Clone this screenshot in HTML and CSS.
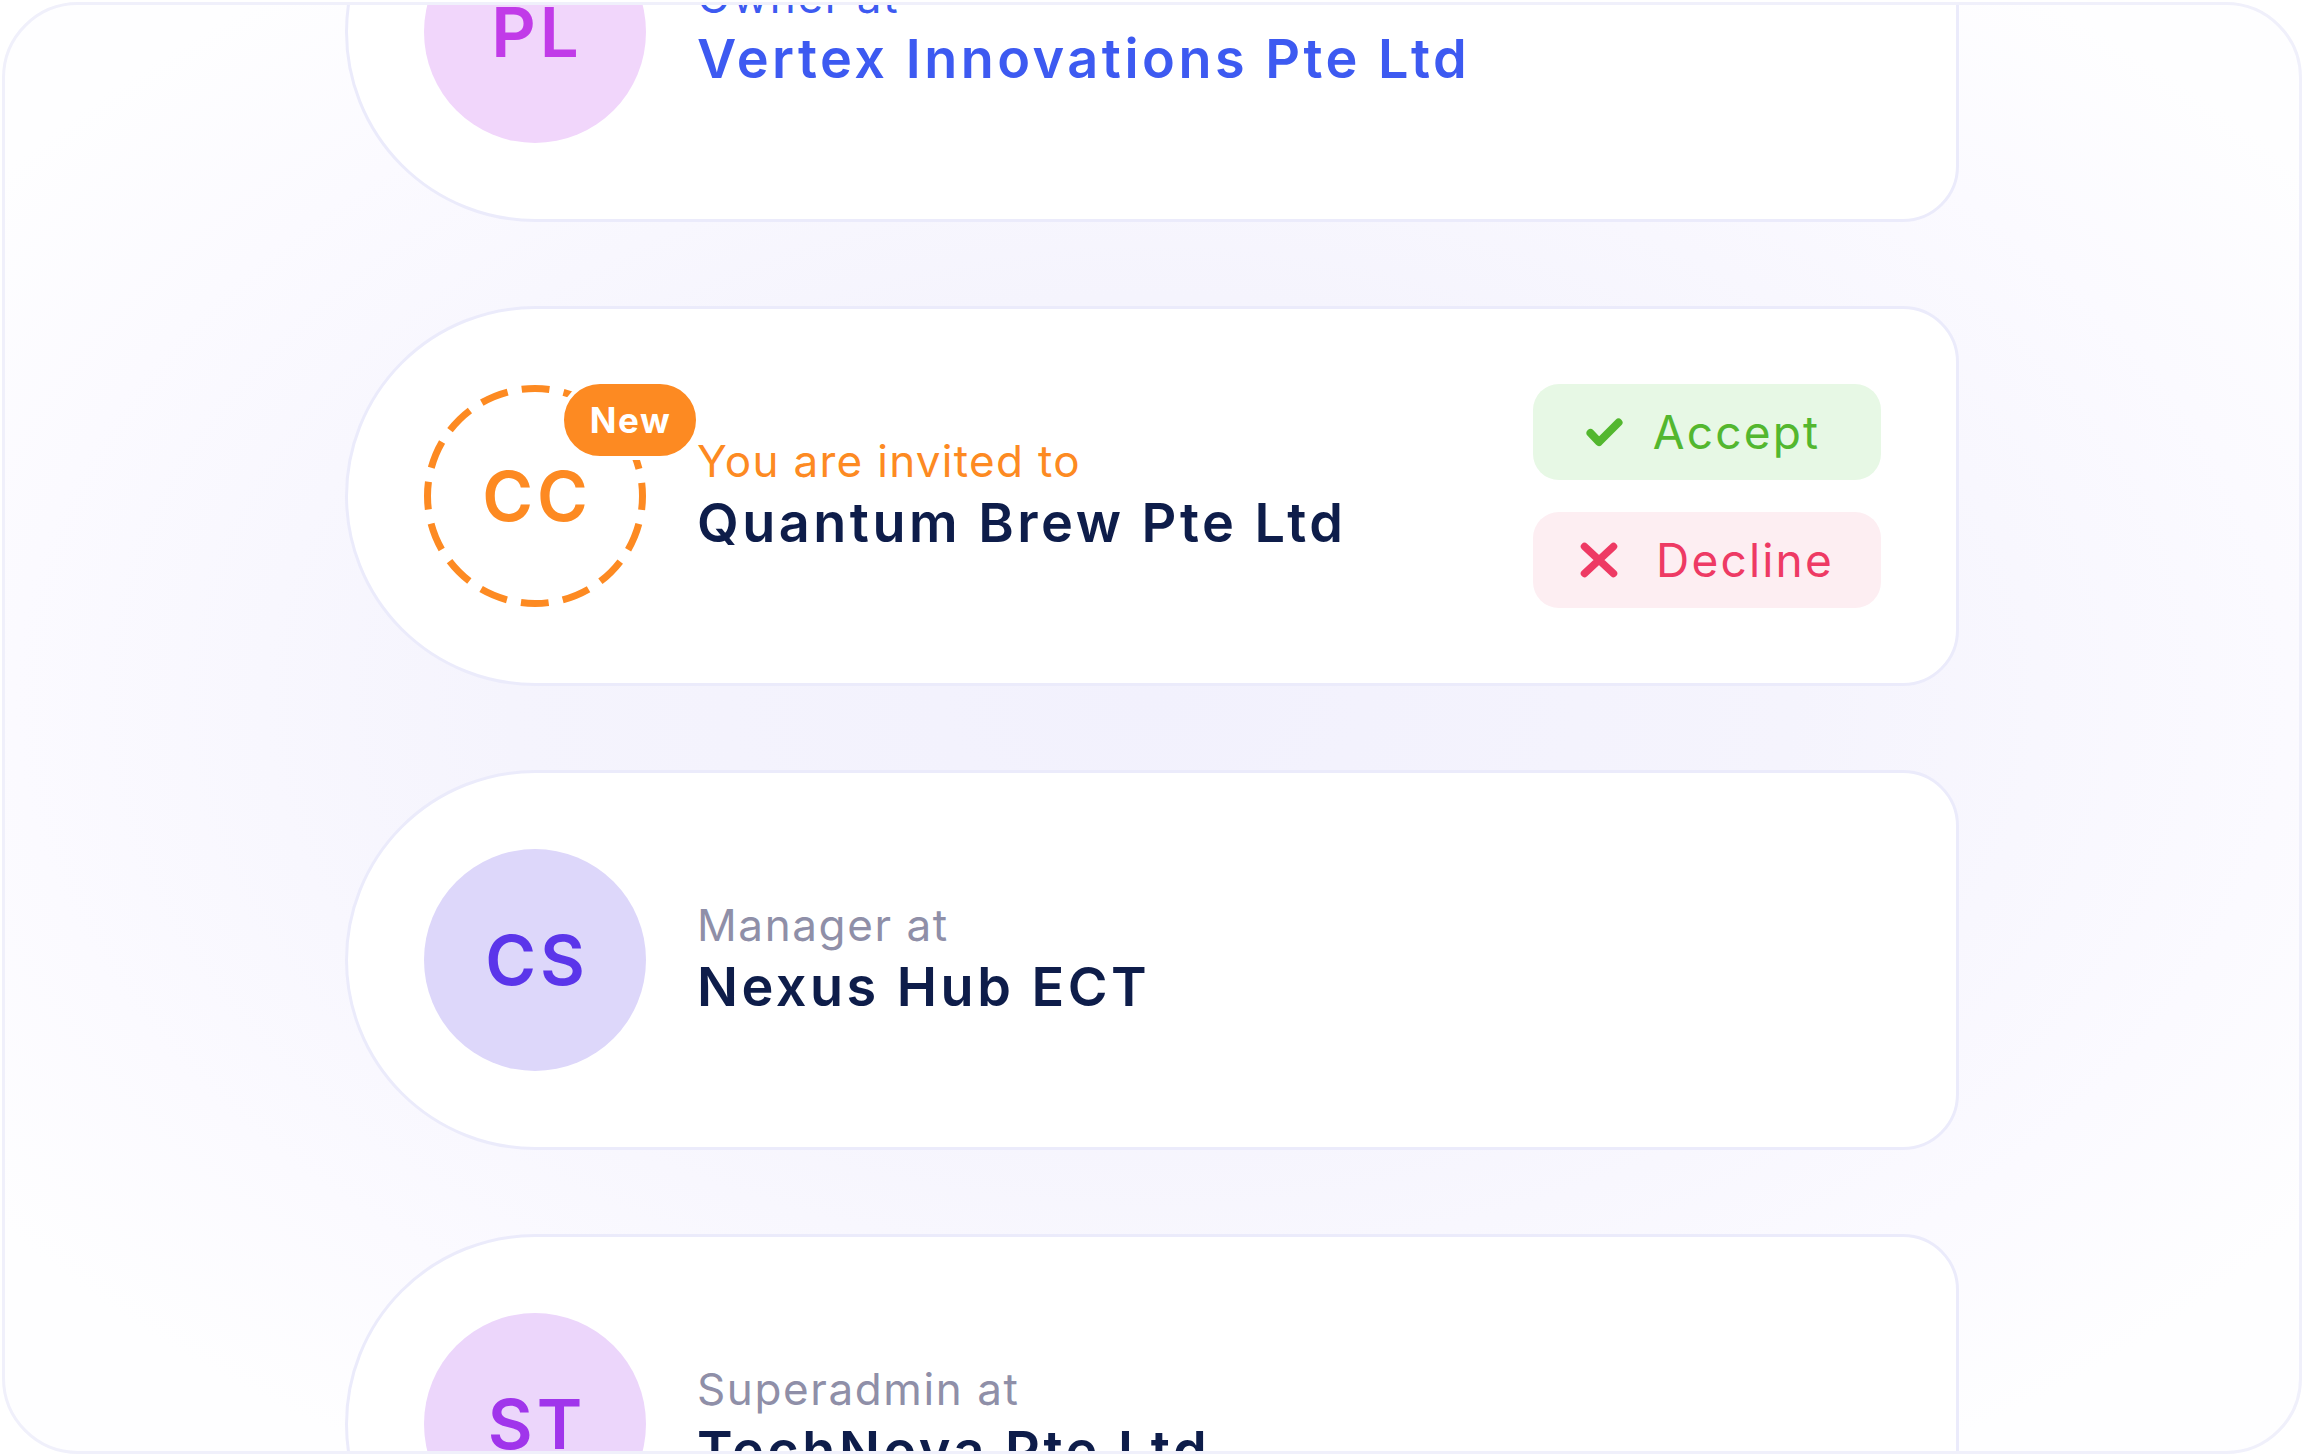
FILE: index.html
```html
<!DOCTYPE html>
<html lang="en">
<head>
<meta charset="utf-8">
<title>Organizations</title>
<link rel="stylesheet" href="styles.css">
</head>
<body>
<div class="frame">
  <div class="list">
    <div class="card">
      <div class="avatar av-pl">PL</div>
      <div class="info">
        <div class="label label-blue">Owner at</div>
        <div class="name name-blue">Vertex Innovations Pte Ltd</div>
      </div>
    </div>

    <div class="card">
      <div class="avatar av-new">
        <svg class="dash" width="222" height="222" viewBox="0 0 222 222">
          <circle cx="111" cy="111" r="107.5" fill="none" stroke="#fd8a22" stroke-width="7" stroke-dasharray="28 14.22" stroke-dashoffset="14"/>
        </svg>
        <span class="initials">CC</span>
        <span class="badge">New</span>
      </div>
      <div class="info">
        <div class="label label-orange">You are invited to</div>
        <div class="name">Quantum Brew Pte Ltd</div>
      </div>
      <div class="actions">
        <button class="btn btn-accept">
          <svg class="icon-check" width="37" height="29" viewBox="0 0 37 29"><path d="M4.5 15 L13 24 L32.5 4.5" fill="none" stroke="#53b72f" stroke-width="8" stroke-linecap="round" stroke-linejoin="round"/></svg>
          <span>Accept</span>
        </button>
        <button class="btn btn-decline">
          <svg class="icon-x" width="38" height="36" viewBox="0 0 38 36"><path d="M4.5 4.5 L33.5 31.5 M33.5 4.5 L4.5 31.5" fill="none" stroke="#ee3a64" stroke-width="7.5" stroke-linecap="round"/></svg>
          <span>Decline</span>
        </button>
      </div>
    </div>

    <div class="card">
      <div class="avatar av-cs">CS</div>
      <div class="info">
        <div class="label">Manager at</div>
        <div class="name">Nexus Hub ECT</div>
      </div>
    </div>

    <div class="card">
      <div class="avatar av-st">ST</div>
      <div class="info">
        <div class="label">Superadmin at</div>
        <div class="name">TechNova Pte Ltd</div>
      </div>
    </div>
  </div>
</div>
</body>
</html>
```

FILE: styles.css
```css
* { box-sizing: border-box; }

html, body {
  margin: 0;
  padding: 0;
  background: #ffffff;
}

body {
  width: 2304px;
  height: 1456px;
  overflow: hidden;
  font-family: Inter, "Noto Sans", "Liberation Sans", sans-serif;
}

.frame {
  margin: 2px;
  width: 2300px;
  height: 1452px;
  border: 3px solid #f0f0fb;
  border-radius: 76px;
  overflow: hidden;
  background: radial-gradient(ellipse 62% 62% at 50% 48%, #f2f1fd 0%, #f5f4fd 45%, #fbfaff 80%, #fefeff 100%);
}

.list {
  width: 1614px;
  margin: -163px auto 0;
  display: flex;
  flex-direction: column;
  gap: 84px;
}

.card {
  height: 380px;
  background: #ffffff;
  border: 3px solid #ebebfb;
  border-radius: 190px 56px 56px 190px;
  padding: 76px 75px 76px 76px;
  display: flex;
  align-items: center;
  gap: 51px;
}

.avatar {
  position: relative;
  flex: 0 0 222px;
  width: 222px;
  height: 222px;
  border-radius: 50%;
  display: flex;
  align-items: center;
  justify-content: center;
  font-size: 69px;
  font-weight: 600;
  letter-spacing: 4px;
  text-indent: 4px;
}

.av-pl { background: #f1d6fb; color: #c13be8; }
.av-cs { background: #ddd7fa; color: #5b35ea; }
.av-st { background: #ecd6fb; color: #a035eb; }
.av-new { background: transparent; color: #fd8a22; }

.dash {
  position: absolute;
  left: 0;
  top: 0;
}

.initials {
  position: relative;
}

.badge {
  position: absolute;
  left: 136px;
  top: -5px;
  width: 140px;
  height: 80px;
  border: 4px solid #ffffff;
  border-radius: 40px;
  background: #fd8a22;
  color: #ffffff;
  font-size: 35px;
  font-weight: 700;
  letter-spacing: 1.5px;
  text-indent: 1px;
  display: flex;
  align-items: center;
  justify-content: center;
}

.info {
  flex: 1 1 auto;
  display: flex;
  flex-direction: column;
}

.label {
  font-size: 44px;
  line-height: 54px;
  font-weight: 400;
  color: #8f8fa8;
  letter-spacing: 1.6px;
}

.name {
  font-size: 54px;
  line-height: 70px;
  font-weight: 600;
  color: #0e1d4a;
  letter-spacing: 3.5px;
}

.label-blue, .name-blue { color: #3d5af1; }
.label-orange { color: #fd8a22; letter-spacing: 1.3px; }

.actions {
  flex: 0 0 348px;
  display: flex;
  flex-direction: column;
  gap: 32px;
}

.btn {
  width: 348px;
  height: 96px;
  border: none;
  border-radius: 26px;
  display: flex;
  align-items: center;
  justify-content: center;
  gap: 30px;
  font-family: inherit;
  font-size: 46px;
  font-weight: 400;
  letter-spacing: 2.2px;
  padding: 0;
}

.icon-x { margin-right: 8px; }

.btn-accept { background: #e7f8e5; color: #53b72f; padding-right: 8px; }
.btn-decline { background: #fdeef2; color: #ee3a64; }
```
